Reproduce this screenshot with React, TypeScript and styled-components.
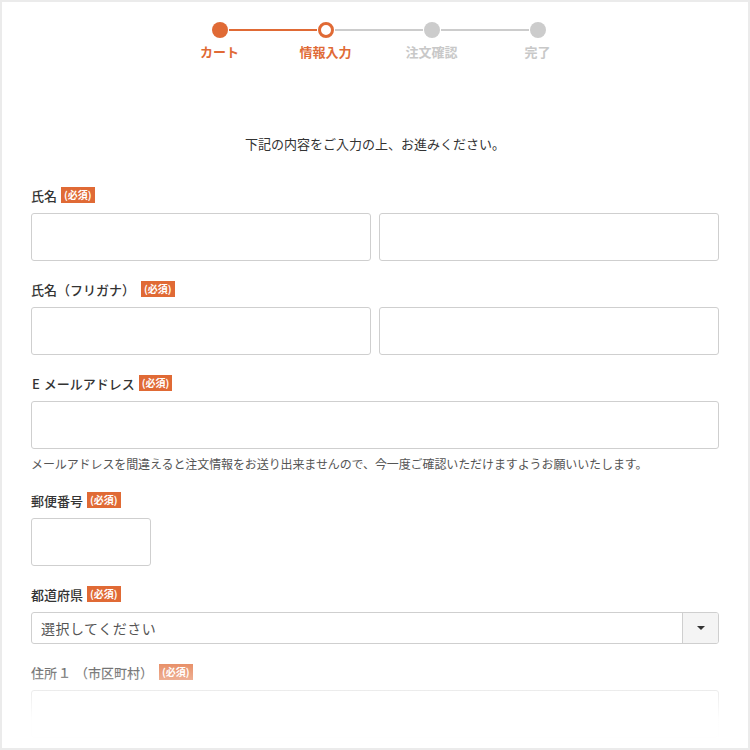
import React from "react"
import styled, { createGlobalStyle, css } from "styled-components"

const orange = "#e06a35"
const grey = "#cccccc"

const GlobalStyle = createGlobalStyle`
  html, body {
    margin: 0;
    padding: 0;
    background: #fff;
  }
  body {
    font-family: "Noto Sans CJK JP", "Noto Sans", sans-serif;
    color: #333;
  }
`

type StepState = "done" | "current" | "todo"

const steps: { label: string; state: StepState }[] = [
  { label: "カート", state: "done" },
  { label: "情報入力", state: "current" },
  { label: "注文確認", state: "todo" },
  { label: "完了", state: "todo" }
]

const App: React.FC = () => (
  <>
    <GlobalStyle />
    <Frame>
      <Stepper>
        {steps.map((step, i) => (
          <Step key={step.label} $lineActive={i === 0}>
            <Dot $state={step.state} />
            <StepLabel $state={step.state}>{step.label}</StepLabel>
          </Step>
        ))}
      </Stepper>

      <Intro>下記の内容をご入力の上、お進みください。</Intro>

      <Form>
        <Field>
          <Label>
            氏名<Required>(必須)</Required>
          </Label>
          <Row>
            <Input />
            <Input />
          </Row>
        </Field>

        <Field>
          <Label>
            氏名（フリガナ）<Required $gap={6}>(必須)</Required>
          </Label>
          <Row>
            <Input />
            <Input />
          </Row>
        </Field>

        <Field>
          <Label>
            <Wide>E</Wide>メールアドレス<Required>(必須)</Required>
          </Label>
          <Input />
          <Note>
            メールアドレスを間違えると注文情報をお送り出来ませんので、今一度ご確認いただけますようお願いいたします。
          </Note>
        </Field>

        <Field>
          <Label>
            郵便番号<Required>(必須)</Required>
          </Label>
          <Input $width={120} />
        </Field>

        <Field>
          <Label>
            都道府県<Required>(必須)</Required>
          </Label>
          <Select>
            <SelectText>選択してください</SelectText>
            <SelectButton>
              <Caret />
            </SelectButton>
          </Select>
        </Field>

        <Field>
          <Label>
            住所<Wide>１</Wide>（市区町村）<Required $gap={6}>(必須)</Required>
          </Label>
          <Input />
        </Field>
      </Form>

      <Fade />
    </Frame>
  </>
)

const Frame = styled.div`
  position: relative;
  width: 750px;
  height: 750px;
  box-sizing: border-box;
  border: 2px solid #ebebeb;
  overflow: hidden;
  background: #fff;
`

const Stepper = styled.div`
  display: grid;
  grid-template-columns: repeat(4, 106px);
  justify-content: center;
  padding: 20px 0 0 7px;
`

const Step = styled.div<{ $lineActive: boolean }>`
  position: relative;
  display: flex;
  flex-direction: column;
  align-items: center;

  &:not(:last-child)::after {
    content: "";
    position: absolute;
    top: 7px;
    left: calc(50% + 9px);
    width: calc(100% - 18px);
    height: 2px;
    background: ${p => (p.$lineActive ? orange : grey)};
  }
`

const Dot = styled.span<{ $state: StepState }>`
  width: 16px;
  height: 16px;
  box-sizing: border-box;
  border-radius: 50%;
  ${p =>
    p.$state === "done" &&
    css`
      background: ${orange};
    `}
  ${p =>
    p.$state === "current" &&
    css`
      background: #fff;
      border: 3px solid ${orange};
    `}
  ${p =>
    p.$state === "todo" &&
    css`
      background: ${grey};
    `}
`

const StepLabel = styled.span<{ $state: StepState }>`
  margin-top: 6px;
  font-size: 13px;
  line-height: 16px;
  font-weight: 700;
  color: ${p => (p.$state === "todo" ? "#c8c8c8" : orange)};
`

const Intro = styled.p`
  margin: 74px 0 0;
  text-align: center;
  font-size: 13px;
  line-height: 20px;
  color: #333;
`

const Form = styled.div`
  padding: 32px 29px 0;
`

const Field = styled.div`
  margin-bottom: 19px;
`

const Label = styled.div`
  display: flex;
  align-items: center;
  height: 18px;
  margin-bottom: 9px;
  font-size: 13px;
  font-weight: 500;
  color: #333;
  white-space: pre;
`

const Wide = styled.span`
  margin: 0 4px 0 1px;
`

const Required = styled.span<{ $gap?: number }>`
  margin-left: ${p => p.$gap ?? 4}px;
  padding: 0 3px;
  height: 16px;
  line-height: 16px;
  font-size: 10px;
  font-weight: 700;
  color: #fff;
  background: ${orange};
`

const Row = styled.div`
  display: grid;
  grid-template-columns: 1fr 1fr;
  gap: 8px;
`

const Input = styled.div<{ $width?: number }>`
  box-sizing: border-box;
  width: ${p => (p.$width ? `${p.$width}px` : "100%")};
  height: 48px;
  border: 1px solid #cfcfcf;
  border-radius: 3px;
  background: #fff;
`

const Note = styled.p`
  margin: 7px 0 0;
  font-size: 12px;
  line-height: 16px;
  color: #555;
  letter-spacing: -0.1px;
  white-space: nowrap;
`

const Select = styled.div`
  display: flex;
  box-sizing: border-box;
  height: 32px;
  border: 1px solid #cfcfcf;
  border-radius: 3px;
  overflow: hidden;
`

const SelectText = styled.span`
  flex: 1;
  padding-left: 9px;
  font-size: 14px;
  line-height: 30px;
  color: #555;
  letter-spacing: 0.5px;
`

const SelectButton = styled.span`
  display: flex;
  align-items: center;
  justify-content: center;
  width: 35px;
  border-left: 1px solid #cfcfcf;
  background: #f4f4f4;
`

const Caret = styled.span`
  width: 0;
  height: 0;
  border-left: 4px solid transparent;
  border-right: 4px solid transparent;
  border-top: 4px solid #333;
`

const Fade = styled.div`
  position: absolute;
  left: 0;
  right: 0;
  bottom: 0;
  height: 104px;
  background: linear-gradient(
    rgba(255, 255, 255, 0) 0%,
    rgba(255, 255, 255, 0.97) 72%,
    #fff 100%
  );
  pointer-events: none;
`

export default App
